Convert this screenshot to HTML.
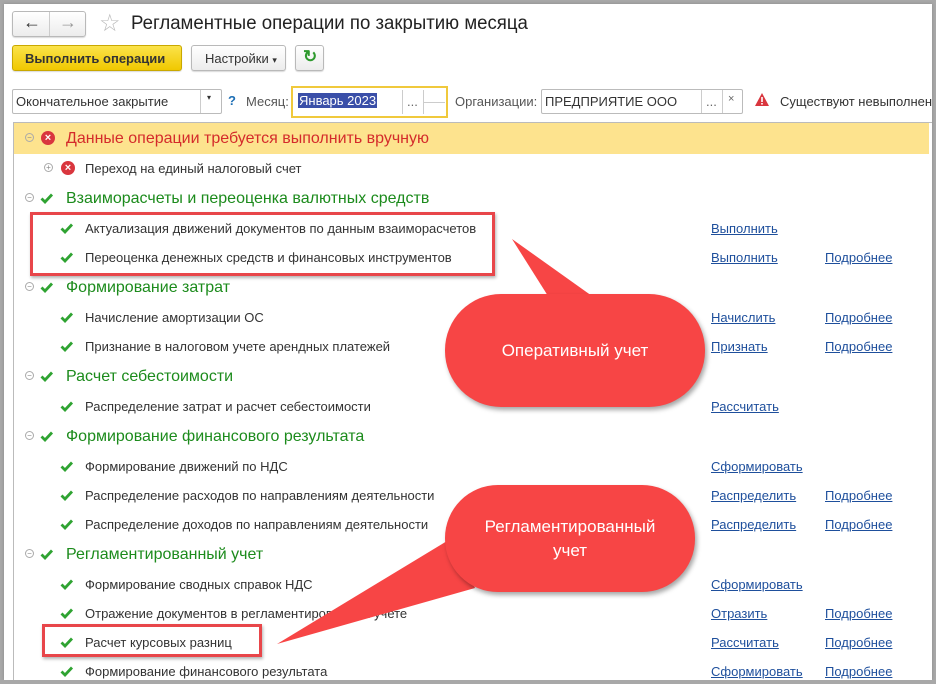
<!DOCTYPE html>
<html><head><meta charset="utf-8"><style>
*{box-sizing:border-box;margin:0;padding:0}
body{width:936px;height:684px;position:relative;overflow:hidden;background:#a8a8a8;font-family:"Liberation Sans",sans-serif;font-size:13px;color:#333}
#page{position:absolute;left:4px;top:4px;width:928px;height:676px;background:#fff;overflow:hidden;box-shadow:0 0 3px #888}
.a{position:absolute;white-space:nowrap}
.btn{position:absolute;border:1px solid #b9b9b9;border-radius:3px;background:linear-gradient(#fff,#ececec);box-shadow:0 1px 1px rgba(0,0,0,.15)}
.grp{font-size:16px;color:#1c8b1c}
.it{font-size:13px;color:#333}
.lk{color:#1e4f9c;text-decoration:underline;font-size:13px}
.ck{position:absolute;width:14px;height:12px}
.mn{position:absolute;width:9px;height:9px;border:1px solid #aaa;border-radius:50%;font-size:8px;line-height:7px;text-align:center;color:#888}
.xr{position:absolute;width:14px;height:14px;border-radius:50%;background:#d9363e;color:#fff;font-size:11px;line-height:14px;text-align:center;font-weight:bold}
</style></head><body>
<div id="page">
<div class="btn" style="left:8px;top:7px;width:74px;height:26px"></div>
<div style="position:absolute;left:45px;top:8px;width:1px;height:24px;background:#ccc"></div>
<div class="a" style="left:19px;top:8px;font-size:18px;color:#333">←</div>
<div class="a" style="left:55px;top:8px;font-size:18px;color:#999">→</div>
<div class="a" style="left:95px;top:5px;font-size:24px;color:#bbb">☆</div>
<div class="a" style="left:127px;top:9px;font-size:19px;color:#222;transform:scaleX(.98);transform-origin:left">Регламентные операции по закрытию месяца</div>
<div class="btn" style="left:8px;top:41px;width:170px;height:26px;background:linear-gradient(#fbe34a,#f0c800);border-color:#c9a800"></div>
<div class="a" style="left:21px;top:47px;font-weight:bold;color:#333">Выполнить операции</div>
<div class="btn" style="left:187px;top:41px;width:95px;height:26px"></div>
<div class="a" style="left:201px;top:47px">Настройки <span style="font-size:9px">▾</span></div>
<div class="btn" style="left:291px;top:41px;width:29px;height:26px"></div>
<div class="a" style="left:299px;top:43px;color:#2e9a2e;font-size:17px;font-weight:bold">↻</div>
<div style="position:absolute;left:8px;top:85px;width:210px;height:25px;border:1px solid #bbb;border-radius:2px"></div>
<div style="position:absolute;left:196px;top:86px;width:1px;height:23px;background:#ccc"></div>
<div class="a" style="left:12px;top:90px">Окончательное закрытие</div>
<div class="a" style="left:203px;top:89px;font-size:8px">▾</div>
<div class="a" style="left:224px;top:89px;color:#1e6fb5;font-weight:bold">?</div>
<div class="a" style="left:242px;top:90px;color:#555">Месяц:</div>
<div style="position:absolute;left:287px;top:82px;width:157px;height:32px;border:2px solid #f0c93c"></div>
<div class="a" style="left:294px;top:89px;background:#3a4fa8;color:#fff;padding:0 1px">Январь 2023</div>
<div style="position:absolute;left:398px;top:86px;width:1px;height:24px;background:#ccc"></div>
<div style="position:absolute;left:419px;top:86px;width:1px;height:24px;background:#ccc"></div>
<div style="position:absolute;left:420px;top:98px;width:21px;height:1px;background:#ccc"></div>
<div class="a" style="left:403px;top:90px;color:#666">...</div>
<div class="a" style="left:451px;top:90px;color:#555">Организации:</div>
<div style="position:absolute;left:537px;top:85px;width:202px;height:25px;border:1px solid #bbb;border-radius:2px"></div>
<div style="position:absolute;left:697px;top:86px;width:1px;height:23px;background:#ccc"></div>
<div style="position:absolute;left:718px;top:86px;width:1px;height:23px;background:#ccc"></div>
<div class="a" style="left:541px;top:90px;color:#333">ПРЕДПРИЯТИЕ ООО</div>
<div class="a" style="left:702px;top:90px;color:#666">...</div>
<div class="a" style="left:724px;top:89px;color:#666;font-size:11px">×</div>
<svg style="position:absolute;left:750px;top:88px" width="16" height="15"><path d="M8 1L15 14H1Z" fill="#d9363e"/><rect x="7.2" y="5" width="1.6" height="5" fill="#fff"/><rect x="7.2" y="11" width="1.6" height="1.6" fill="#fff"/></svg>
<div class="a" style="left:776px;top:90px;color:#333">Существуют невыполнен</div>
<div style="position:absolute;left:9px;top:118px;width:920px;height:570px;border:1px solid #bbb"></div>
<div style="position:absolute;left:10px;top:119px;width:915px;height:31px;background:#fde38e"></div>
</div>
<div style="position:absolute;left:0;top:0">
<div class="mn" style="left:25px;top:133px">−</div><div class="xr" style="left:41px;top:131px">×</div>
<div class="a" style="left:66px;top:130px;font-size:16px;color:#d42b2b">Данные операции требуется выполнить вручную</div>
<div class="mn" style="left:44px;top:163px">+</div><div class="xr" style="left:61px;top:161px">×</div>
<div class="a it" style="left:85px;top:161px">Переход на единый налоговый счет</div>
</div>
<svg width="0" height="0" style="position:absolute"><defs><path id="c" d="M1.5 6.5L5 10L12 2.5" stroke="#2fa332" stroke-width="2.8" fill="none"/></defs></svg>
<div id="g" style="position:absolute;left:0;top:0;width:936px;height:684px">
<div class="mn" style="left:25px;top:193px">−</div><svg class="ck" style="left:40px;top:192px"><use href="#c"/></svg><div class="a grp" style="left:66px;top:190px">Взаиморасчеты и переоценка валютных средств</div>
<svg class="ck" style="left:60px;top:222px"><use href="#c"/></svg><div class="a it" style="left:85px;top:221px">Актуализация движений документов по данным взаиморасчетов</div><div class="a lk" style="left:711px;top:221px">Выполнить</div>
<svg class="ck" style="left:60px;top:251px"><use href="#c"/></svg><div class="a it" style="left:85px;top:250px">Переоценка денежных средств и финансовых инструментов</div><div class="a lk" style="left:711px;top:250px">Выполнить</div><div class="a lk" style="left:825px;top:250px">Подробнее</div>
<div class="mn" style="left:25px;top:282px">−</div><svg class="ck" style="left:40px;top:281px"><use href="#c"/></svg><div class="a grp" style="left:66px;top:279px">Формирование затрат</div>
<svg class="ck" style="left:60px;top:311px"><use href="#c"/></svg><div class="a it" style="left:85px;top:310px">Начисление амортизации ОС</div><div class="a lk" style="left:711px;top:310px">Начислить</div><div class="a lk" style="left:825px;top:310px">Подробнее</div>
<svg class="ck" style="left:60px;top:340px"><use href="#c"/></svg><div class="a it" style="left:85px;top:339px">Признание в налоговом учете арендных платежей</div><div class="a lk" style="left:711px;top:339px">Признать</div><div class="a lk" style="left:825px;top:339px">Подробнее</div>
<div class="mn" style="left:25px;top:371px">−</div><svg class="ck" style="left:40px;top:370px"><use href="#c"/></svg><div class="a grp" style="left:66px;top:368px">Расчет себестоимости</div>
<svg class="ck" style="left:60px;top:400px"><use href="#c"/></svg><div class="a it" style="left:85px;top:399px">Распределение затрат и расчет себестоимости</div><div class="a lk" style="left:711px;top:399px">Рассчитать</div>
<div class="mn" style="left:25px;top:431px">−</div><svg class="ck" style="left:40px;top:430px"><use href="#c"/></svg><div class="a grp" style="left:66px;top:428px">Формирование финансового результата</div>
<svg class="ck" style="left:60px;top:460px"><use href="#c"/></svg><div class="a it" style="left:85px;top:459px">Формирование движений по НДС</div><div class="a lk" style="left:711px;top:459px">Сформировать</div>
<svg class="ck" style="left:60px;top:489px"><use href="#c"/></svg><div class="a it" style="left:85px;top:488px">Распределение расходов по направлениям деятельности</div><div class="a lk" style="left:711px;top:488px">Распределить</div><div class="a lk" style="left:825px;top:488px">Подробнее</div>
<svg class="ck" style="left:60px;top:518px"><use href="#c"/></svg><div class="a it" style="left:85px;top:517px">Распределение доходов по направлениям деятельности</div><div class="a lk" style="left:711px;top:517px">Распределить</div><div class="a lk" style="left:825px;top:517px">Подробнее</div>
<div class="mn" style="left:25px;top:549px">−</div><svg class="ck" style="left:40px;top:548px"><use href="#c"/></svg><div class="a grp" style="left:66px;top:546px">Регламентированный учет</div>
<svg class="ck" style="left:60px;top:578px"><use href="#c"/></svg><div class="a it" style="left:85px;top:577px">Формирование сводных справок НДС</div><div class="a lk" style="left:711px;top:577px">Сформировать</div>
<svg class="ck" style="left:60px;top:607px"><use href="#c"/></svg><div class="a it" style="left:85px;top:606px">Отражение документов в регламентированном учете</div><div class="a lk" style="left:711px;top:606px">Отразить</div><div class="a lk" style="left:825px;top:606px">Подробнее</div>
<svg class="ck" style="left:60px;top:636px"><use href="#c"/></svg><div class="a it" style="left:85px;top:635px">Расчет курсовых разниц</div><div class="a lk" style="left:711px;top:635px">Рассчитать</div><div class="a lk" style="left:825px;top:635px">Подробнее</div>
<svg class="ck" style="left:60px;top:665px"><use href="#c"/></svg><div class="a it" style="left:85px;top:664px">Формирование финансового результата</div><div class="a lk" style="left:711px;top:664px">Сформировать</div><div class="a lk" style="left:825px;top:664px">Подробнее</div>
<div style="position:absolute;left:30px;top:212px;width:465px;height:64px;border:3px solid #e8464a;box-shadow:1px 2px 3px rgba(0,0,0,.3)"></div>
<div style="position:absolute;left:42px;top:624px;width:220px;height:33px;border:3px solid #e8464a;box-shadow:1px 2px 3px rgba(0,0,0,.3)"></div>
<svg style="position:absolute;left:0;top:0" width="936" height="684">
<path d="M512 239L548 296L592 296Z" fill="#f74545"/>
<path d="M277 644L452 538L475 588Z" fill="#f74545"/>
</svg>
<div style="position:absolute;left:445px;top:294px;width:260px;height:113px;border-radius:56px;background:#f74545;box-shadow:2px 3px 5px rgba(0,0,0,.35)"></div>
<div class="a" style="left:445px;top:341px;width:260px;text-align:center;color:#fff;font-size:17px">Оперативный учет</div>
<div style="position:absolute;left:445px;top:485px;width:250px;height:107px;border-radius:53px;background:#f74545;box-shadow:2px 3px 5px rgba(0,0,0,.35)"></div>
<div class="a" style="left:445px;top:515px;width:250px;text-align:center;color:#fff;font-size:17px;line-height:24px">Регламентированный<br>учет</div>
</div>
<div style="position:absolute;left:0;top:680px;width:936px;height:4px;background:#a8a8a8"></div>
</body></html>
